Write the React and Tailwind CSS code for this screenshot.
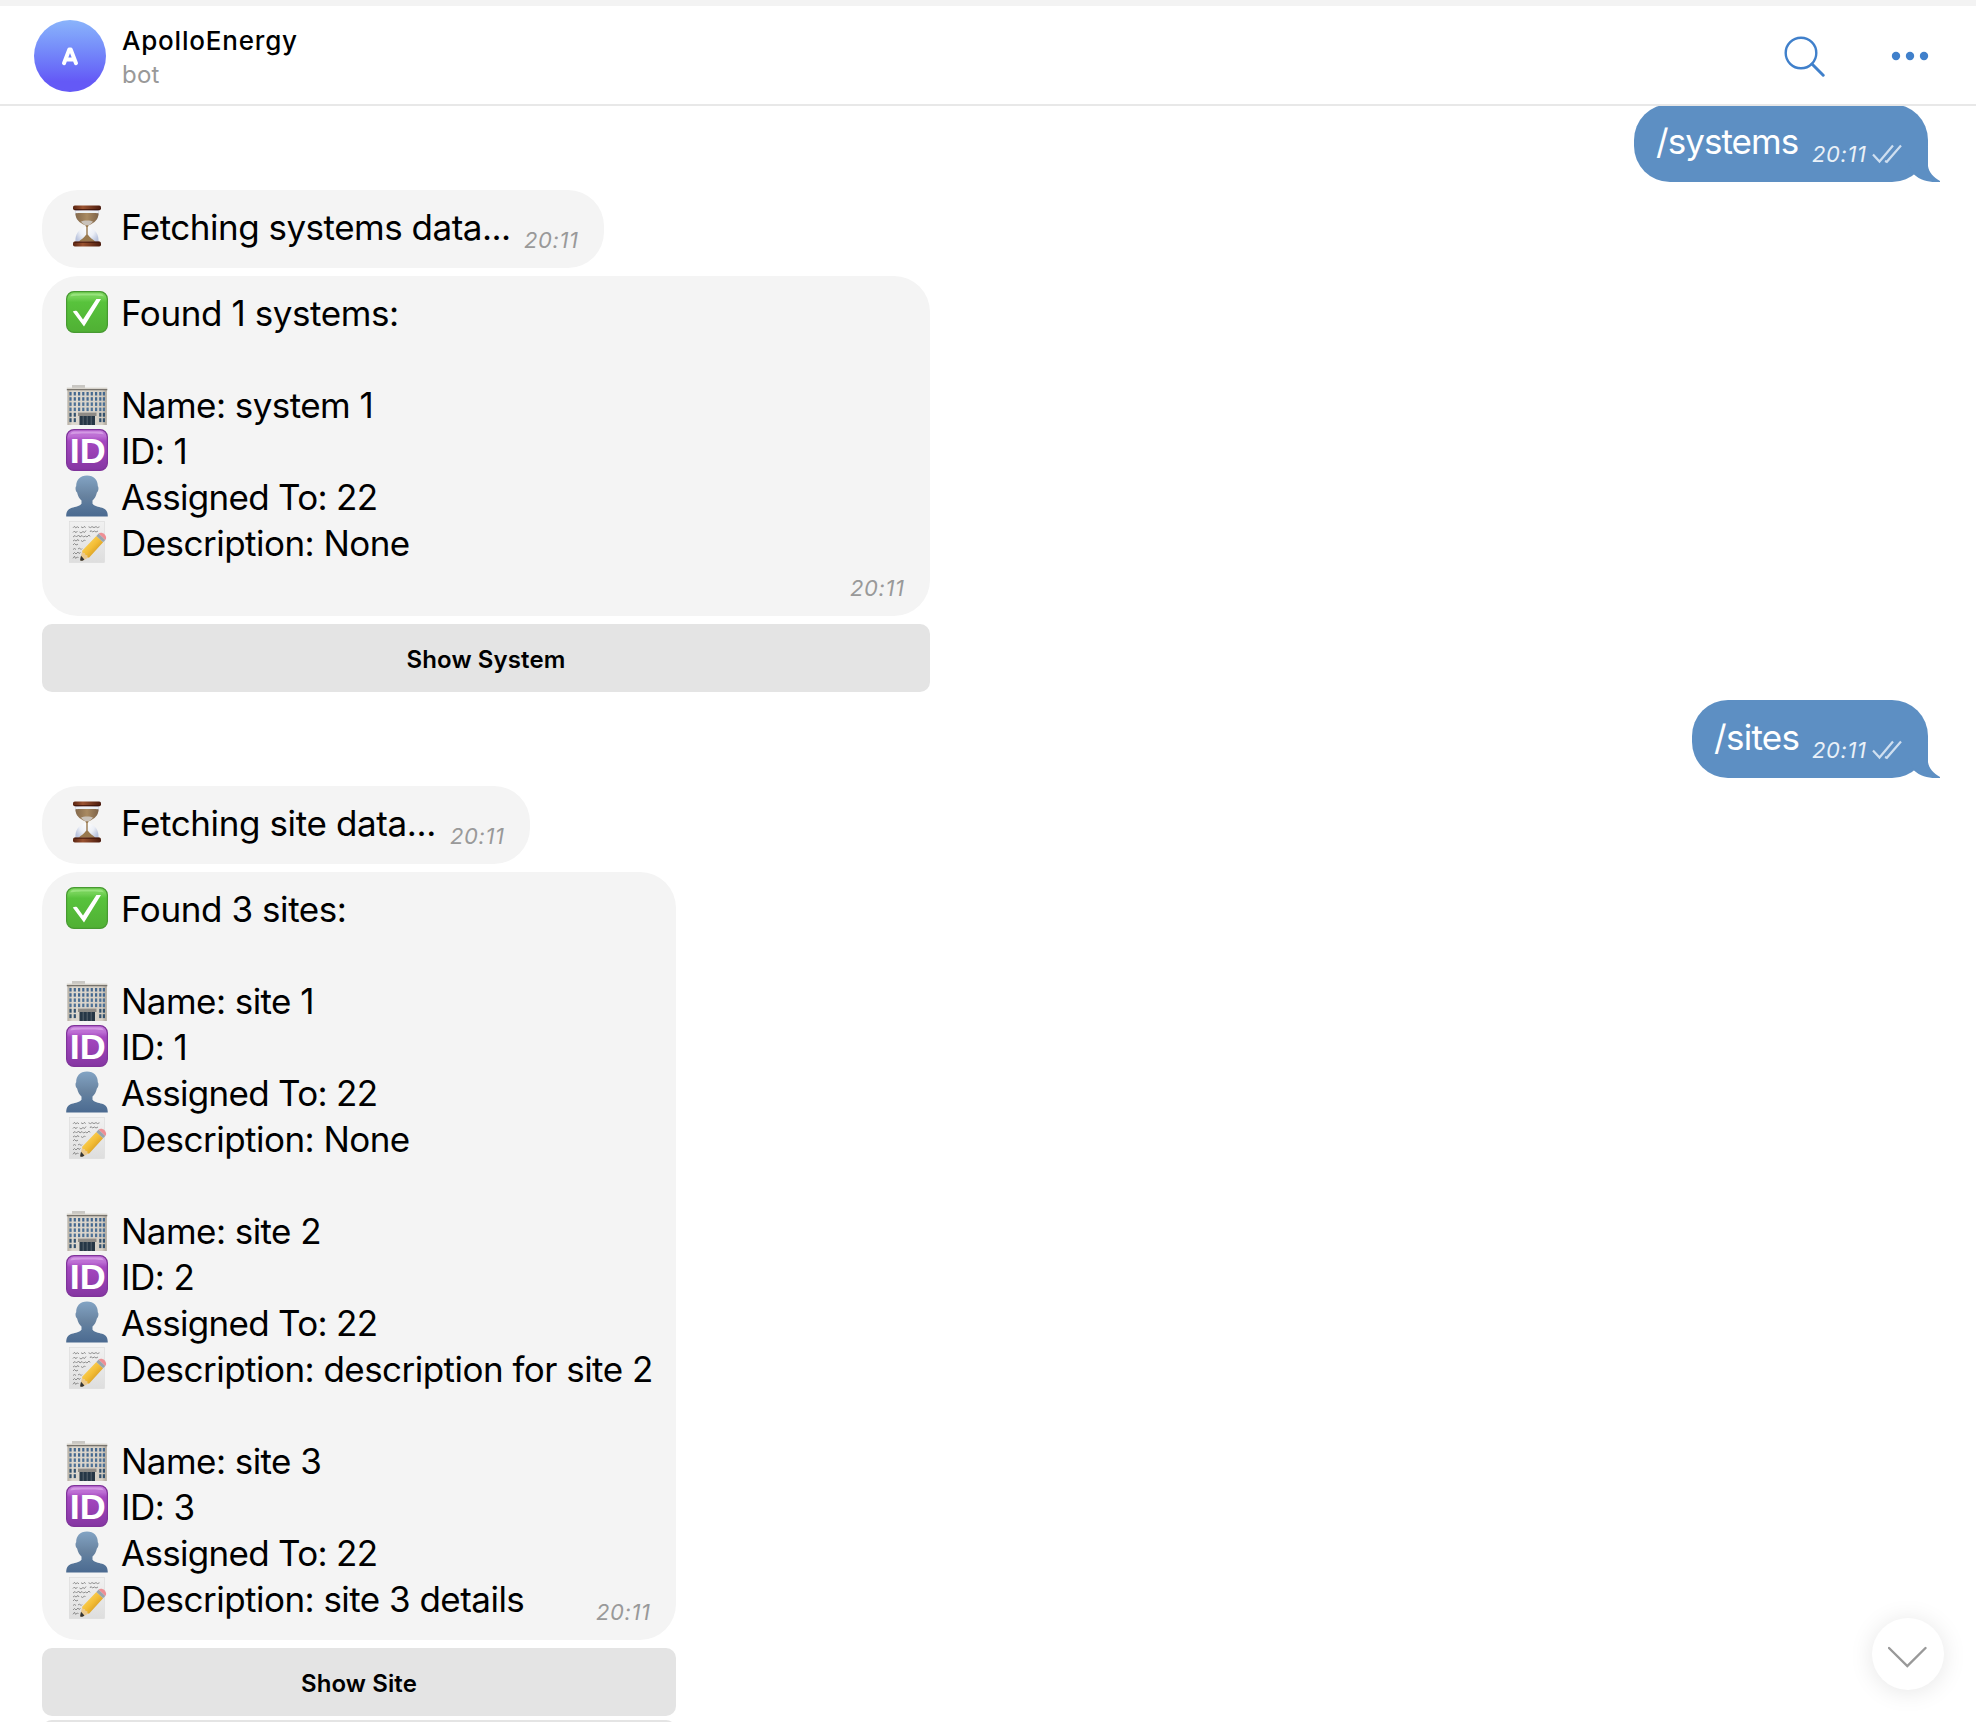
const HourglassIcon = () => (
  <svg viewBox="0 0 42 42" className="h-[42px] w-[42px] shrink-0">
    <defs>
      <linearGradient id="wood" x1="0" x2="1" y1="0" y2="0">
        <stop offset="0" stopColor="#5a2411" />
        <stop offset=".35" stopColor="#9a5230" />
        <stop offset="1" stopColor="#4a1a0c" />
      </linearGradient>
      <linearGradient id="sandTop" x1="0" x2="1" y1="0" y2="0">
        <stop offset="0" stopColor="#84694c" />
        <stop offset=".5" stopColor="#a98a62" />
        <stop offset="1" stopColor="#7d6248" />
      </linearGradient>
      <radialGradient id="glass" cx=".5" cy=".5" r=".6">
        <stop offset="0" stopColor="#ffffff" />
        <stop offset=".6" stopColor="#eceff6" />
        <stop offset="1" stopColor="#b9c3dd" />
      </radialGradient>
    </defs>
    <path d="M9.500 5h23c.3 8-3 12.300-9.800 15.600v1.200C29.500 25 33 29 32.600 37H9.400C9 29 12.500 25 19.300 21.800v-1.200C12.500 17.300 9.200 13 9.500 5z" fill="url(#glass)" />
    <path d="M9.300 8.500c3-1 20.400-1 23.400 0-.5 6-3.700 9-9.700 11.800L21.800 22h-1.600L19 20.300C13 17.500 9.800 14.500 9.300 8.500z" fill="url(#sandTop)" />
    <path d="M15 16.500c2-1.500 10-1.500 12 0-1.500 2.200-3.500 3.200-5 4.500h-2c-1.500-1.300-3.500-2.300-5-4.500z" fill="#c9c2ba" />
    <path d="M10 5.800h22v2.200H10z" fill="#edf1f5" />
    <path d="M20.300 20h1.400v9.500c1.800 3 5.300 5 7.800 7.300h-17c2.500-2.300 6-4.300 7.800-7.300z" fill="#98784e" />
    <rect x="7" y="0.500" width="28" height="4.800" rx="1.800" fill="url(#wood)" />
    <rect x="7" y="36.600" width="28" height="4.900" rx="1.800" fill="url(#wood)" />
    <path d="M8.500 4.600h25M8.500 37.200h25" stroke="#3b1309" strokeWidth=".9" />
  </svg>
);

const CheckIcon = () => (
  <svg viewBox="0 0 42 42" className="h-[42px] w-[42px] shrink-0">
    <defs>
      <linearGradient id="green" x1="0" x2="0" y1="0" y2="1">
        <stop offset="0" stopColor="#78d35a" />
        <stop offset=".14" stopColor="#74d257" />
        <stop offset=".26" stopColor="#58c33c" />
        <stop offset="1" stopColor="#50b034" />
      </linearGradient>
    </defs>
    <rect x=".6" y=".6" width="40.800" height="40.800" rx="7.500" fill="url(#green)" stroke="#479a31" strokeWidth="1.200" />
    <path d="M4 5.500C5 2.700 7 2.400 9 2.400h24c2 0 4 .3 5 3.100-3-1.500-31-1.500-34 0z" fill="#a5ea8c" opacity=".7" />
    <path d="M6.800 20.600c1.500-.9 3-1 4.300-.4l5.900 8.300L30.400 8h4.600L18 35.600z" fill="#fff" />
  </svg>
);

const BuildingIcon = () => {
  const cols = [3.400, 7.700, 12, 16.200, 20.500, 24.700, 29, 33.200, 36.800];
  return (
    <svg viewBox="0 -1 42 42" className="h-[42px] w-[42px] shrink-0">
      <defs>
        <linearGradient id="wall" x1="0" x2="1" y1="0" y2="0">
          <stop offset="0" stopColor="#b5aea2" />
          <stop offset=".12" stopColor="#ddd8cf" />
          <stop offset=".88" stopColor="#d5cfc5" />
          <stop offset="1" stopColor="#aaa398" />
        </linearGradient>
      </defs>
      <rect x="6" y="1" width="13" height="3" fill="#c9c7c3" />
      <rect x="1.400" y="4" width="39.400" height="37" fill="url(#wall)" />
      <rect x=".8" y="3.600" width="40.500" height="1.400" fill="#d8d4cc" />
      <rect x=".8" y="5" width="40.500" height="1.300" fill="#77736d" />
      {[8, 13.200, 18.400, 23.600].map((y) =>
        cols.map((x) => <rect key={`${x}-${y}`} x={x} y={y} width="2.200" height="3.500" fill={y > 18 ? "#4d7196" : "#44688f"} />)
      )}
      {[28.800, 34.200].map((y) =>
        cols.filter((x) => x < 11 || x > 31).map((x) => <rect key={`${x}-${y}`} x={x} y={y} width="2.200" height="3.900" fill="#33526e" />)
      )}
      <rect x="12" y="28.600" width="18.500" height="3.400" fill="#8d8a86" />
      <rect x="13.500" y="32" width="15.500" height="9" fill="#273746" />
      <path d="M17.200 32v9M21.200 32v9M25.200 32v9" stroke="#66727b" strokeWidth=".8" />
    </svg>
  );
};

const IdIcon = () => (
  <svg viewBox="0 0 42 42" className="h-[42px] w-[42px] shrink-0">
    <defs>
      <linearGradient id="violet" x1="0" x2="0" y1="0" y2="1">
        <stop offset="0" stopColor="#c277d8" />
        <stop offset=".16" stopColor="#bd6ed4" />
        <stop offset=".28" stopColor="#a548c0" />
        <stop offset="1" stopColor="#8536a2" />
      </linearGradient>
    </defs>
    <rect x=".6" y=".6" width="40.800" height="40.800" rx="7.500" fill="url(#violet)" stroke="#7f339a" strokeWidth="1.200" />
    <path d="M4 5.500C5 2.700 7 2.400 9 2.400h24c2 0 4 .3 5 3.100-3-1.500-31-1.500-34 0z" fill="#dcaae9" opacity=".7" />
    <text x="21.800" y="33.500" textAnchor="middle" textLength="36" lengthAdjust="spacingAndGlyphs" fontFamily="Liberation Sans, sans-serif" fontWeight="700" fontSize="35" fill="#fff">ID</text>
  </svg>
);

const PersonIcon = () => (
  <svg viewBox="0 0 42 42" className="h-[42px] w-[42px] shrink-0">
    <defs>
      <linearGradient id="bust" x1="0" x2="0" y1="0" y2="1">
        <stop offset="0" stopColor="#83a4c4" />
        <stop offset=".5" stopColor="#67829f" />
        <stop offset=".75" stopColor="#577699" />
        <stop offset="1" stopColor="#4b6a90" />
      </linearGradient>
    </defs>
    <path d="M21 .5c7 0 11 4.600 10.800 10.800 1 .6 1 4.700-.9 6.200-.8 3.700-2.300 6.200-4.400 8v3.200c1.500 2.600 6 2.900 9.600 4.100 4 1.300 5.700 3.700 5.700 8.700H.2c0-5 1.700-7.400 5.700-8.700 3.600-1.200 8.100-1.500 9.600-4.100v-3.200c-2.100-1.800-3.600-4.300-4.400-8-1.900-1.500-1.900-5.600-.9-6.200C10 5.100 14 .5 21 .5z" fill="url(#bust)" />
  </svg>
);

const MemoIcon = () => (
  <svg viewBox="0 0 42 42" className="h-[42px] w-[42px] shrink-0">
    <defs>
      <linearGradient id="sheet" x1="0" x2="0" y1="0" y2="1">
        <stop offset="0" stopColor="#f1f1f1" />
        <stop offset="1" stopColor="#dedede" />
      </linearGradient>
      <linearGradient id="pencil" x1="0" x2="1" y1="0" y2="1">
        <stop offset="0" stopColor="#ffe27a" />
        <stop offset=".5" stopColor="#f3bd35" />
        <stop offset="1" stopColor="#b97c15" />
      </linearGradient>
    </defs>
    <rect x="3.300" y=".6" width="35" height="40.800" fill="url(#sheet)" stroke="#d9d9d9" strokeWidth=".6" />
    <g fill="none" stroke="#777" strokeWidth=".8">
      <path d="M7 6.800l1.500-1.500 1 1.500 2-1 1.500 1m2-1l2 1 1.500-1.500 1 1.500m3-1l2 .8 1.500-1 2 1 2-1 1.500 1 2-.8" />
      <path d="M7 11.500l1.500-1.500 1 1.500 2-1m2 .5l1.500 1 2-1.500 1.500 1 1.500-2m4 1.500l1-1.500 1.500 1.500 2-1 1.500 1 2-1" />
      <path d="M7 16l2-1.500 1.500 1.500 2-2 1.500 2 2-1.500 1.500 1.500 2-1 1.500 1 2-2 1 1.500" />
      <path d="M7 20l1.500-1 1.500 1 2-1.500 1 1.500m2-.5l1.500 1 2-1.500 1 1" />
      <path d="M7 24l1.500-1.500 1.500 1.500 2-.8" />
      <path d="M7 28.500l1.500-1 1.500 1m2-.5l1.500-1 1.500 1.500 1-1" />
      <path d="M7 33l1.500-1.500 1.500 1.500 2-2 1 1.500 1.500-1" />
      <path d="M7 37.300l1.500-2 1 2 2-1.300 1 1" />
    </g>
    <path d="M15.200 39.800c-1-.2-1.200-1-.8-2.400l1.800-7.600 7 6.500-5.800 3c-1 .5-1.600.6-2.200.5z" fill="#eac98e" />
    <path d="M15.200 39.800c-1-.2-1.200-1-.8-2.400l.6-2.600 3.400 3.800-1 .6c-1 .5-1.600.7-2.200.6z" fill="#333" />
    <path d="M16.200 29.800L30.300 15l6.800 6.300-13.900 15.200c-1.500 0-2-.8-2-2.300-1.700.1-2.500-.6-2.400-2.100-1.700.1-2.600-.7-2.600-2.300z" fill="url(#pencil)" />
    <path d="M30.300 15l2.400-2.500 6.700 6.400-2.300 2.400z" fill="#9aa5ad" />
    <path d="M32.700 12.500c1.500-1.300 4-1 5.800.7s2.200 4.200.9 5.700z" fill="#ee8f95" />
  </svg>
);

const ICONS = {
  hourglass: HourglassIcon,
  check: CheckIcon,
  building: BuildingIcon,
  id: IdIcon,
  person: PersonIcon,
  memo: MemoIcon,
};

const Line = ({ icon, text, tracking = "tracking-[-0.5px]" }) => {
  const Icon = ICONS[icon];
  return (
    <div className="flex h-[46px] items-start gap-[13px]">
      <div className="pt-px">
        <Icon />
      </div>
      <span className={`${tracking} text-[35px] leading-[46px] whitespace-pre text-black`}>{text}</span>
    </div>
  );
};

const Time = () => (
  <span className="-mr-[0.6px] text-[22px] leading-[26px] tracking-[0.6px] text-[#999] italic">20:11</span>
);

const Status = ({ text, width, tracking }) => (
  <div className={`${width} flex h-[78px] items-end justify-between rounded-[36px] bg-[#f4f4f4] pr-[26px] pb-[14px] pl-6`}>
    <div className="pb-1">
      <Line icon="hourglass" text={text} tracking={tracking} />
    </div>
    <div className="flex h-[26px] items-end pb-[1px]">
      <Time />
    </div>
  </div>
);

const Report = ({ title, records, width, button, trailing }) => (
  <div className={`${width} flex flex-col gap-2`}>
    <div className="relative rounded-[36px] bg-[#f4f4f4] pt-[14px] pb-[18px] pl-6">
      <Line icon="check" text={title} tracking="tracking-[-0.42px]" />
      {records.map((r) => (
        <div key={r.name} className="pt-[46px]">
          <Line icon="building" text={`Name: ${r.name}`} tracking="tracking-[-0.55px]" />
          <Line icon="id" text={`ID: ${r.id}`} />
          <Line icon="person" text="Assigned To: 22" tracking="tracking-[-0.7px]" />
          <Line icon="memo" text={`Description: ${r.description}`} tracking="tracking-[-0.53px]" />
        </div>
      ))}
      {trailing && <div className="h-8" />}
      <div className="absolute right-[26px] bottom-[15px] flex">
        <Time />
      </div>
    </div>
    <button className="h-[68px] rounded-[10px] bg-[#e4e4e4] pt-[3px] text-[24px] leading-[65px] font-semibold tracking-[0.1px] text-black">
      {button}
    </button>
  </div>
);

const Command = ({ text, width, tracking }) => (
  <div className={`${width} relative mr-12 flex h-[78px] items-start justify-between self-end rounded-[36px] bg-[#5d8fc3] pr-[26px] pl-[22px] text-white`}>
    <span className={`${tracking} pt-[14px] text-[35px] leading-[46px]`}>{text}</span>
    <div className="flex items-start gap-1.5 pt-[37px]">
      <span className="-mr-[0.6px] text-[22px] leading-[26px] tracking-[0.6px] text-[#eaf1f8] italic">20:11</span>
      <svg viewBox="0 0 30 20" className="mt-[3px] h-5 w-[30px]" fill="none" stroke="#cfdff0" strokeWidth="2.200">
        <path d="M1 10.500l6.500 7L21 1.500M13 17l1.800.8L29 1.500" />
      </svg>
    </div>
    <svg viewBox="0 0 40 40" className="absolute -right-3 bottom-0 h-10 w-10" fill="#5d8fc3">
      <path d="M8 20L28 4v20c.8 6 5.500 11.500 12 15v1c-10 .3-19-1.200-26-7.600z" />
    </svg>
  </div>
);

export default function App() {
  return (
    <div className="relative flex h-[1722px] w-[1976px] flex-col overflow-hidden bg-white font-['Inter',sans-serif]">
      <header className="z-10 flex h-[106px] shrink-0 items-start border-t-[6px] border-b-2 border-t-[#f3f3f3] border-b-[#e8e8e8] bg-white pt-[14px] pl-[34px]">
        <div className="flex h-[72px] w-[72px] items-center justify-center rounded-full bg-linear-to-b from-[#8ab4fb] to-[#6459f6] to-85% text-white">
          <svg viewBox="0 0 16 18" className="h-[18px] w-4 overflow-visible" fill="none" stroke="#fff" strokeWidth="4" strokeLinecap="round" strokeLinejoin="round">
            <path d="M2 16.200L7.300 2.400h1.400L14 16.200M4.500 12.400h7" />
          </svg>
        </div>
        <div className="flex flex-col pt-[3px] pl-4">
          <span className="text-[26px] leading-[35px] font-medium tracking-[0.8px] text-black">ApolloEnergy</span>
          <span className="text-[24px] leading-[34px] tracking-[0.2px] text-[#999]">bot</span>
        </div>
        <div className="ml-auto flex items-center gap-[66px] pt-[15px] pr-[47px]">
          <svg viewBox="0 0 42 42" className="h-[42px] w-[42px]" fill="none" stroke="#4080cb" strokeLinecap="round">
            <circle cx="18" cy="18" r="15.300" strokeWidth="2.400" />
            <path d="M29 29l11.200 11.200" strokeWidth="3" />
          </svg>
          <svg viewBox="0 0 38 10" className="h-[10px] w-[38px]" fill="#4080cb">
            <circle cx="5" cy="5" r="4.200" />
            <circle cx="19" cy="5" r="4.200" />
            <circle cx="33" cy="5" r="4.200" />
          </svg>
        </div>
      </header>
      <main className="-mt-0.5 flex flex-col gap-2 pl-[42px]">
        <Command text="/systems" width="w-[294px]" tracking="tracking-[-0.95px]" />
        <Status text="Fetching systems data..." width="w-[562px]" />
        <Report
          title="Found 1 systems:"
          width="w-[888px]"
          button="Show System"
          trailing
          records={[{ name: "system 1", id: 1, description: "None" }]}
        />
        <Command text="/sites" width="w-[236px]" tracking="tracking-[-0.7px]" />
        <Status text="Fetching site data..." width="w-[488px]" tracking="tracking-[-0.38px]" />
        <Report
          title="Found 3 sites:"
          width="w-[634px]"
          button="Show Site"
          records={[
            { name: "site 1", id: 1, description: "None" },
            { name: "site 2", id: 2, description: "description for site 2" },
            { name: "site 3", id: 3, description: "site 3 details" },
          ]}
        />
        <div className="-mt-1 h-[68px] w-[634px] rounded-[10px] bg-[#e4e4e4]" />
      </main>
      <button className="absolute right-8 bottom-8 flex h-[72px] w-[72px] items-center justify-center rounded-full bg-white shadow-[0_2px_24px_rgba(0,0,0,0.1)]">
        <svg viewBox="0 0 40 22" className="mt-1.5 h-[22px] w-10" fill="none" stroke="#999" strokeWidth="2.400" strokeLinecap="round">
          <path d="M1 2l18.300 18L37.500 2" />
        </svg>
      </button>
    </div>
  );
}
